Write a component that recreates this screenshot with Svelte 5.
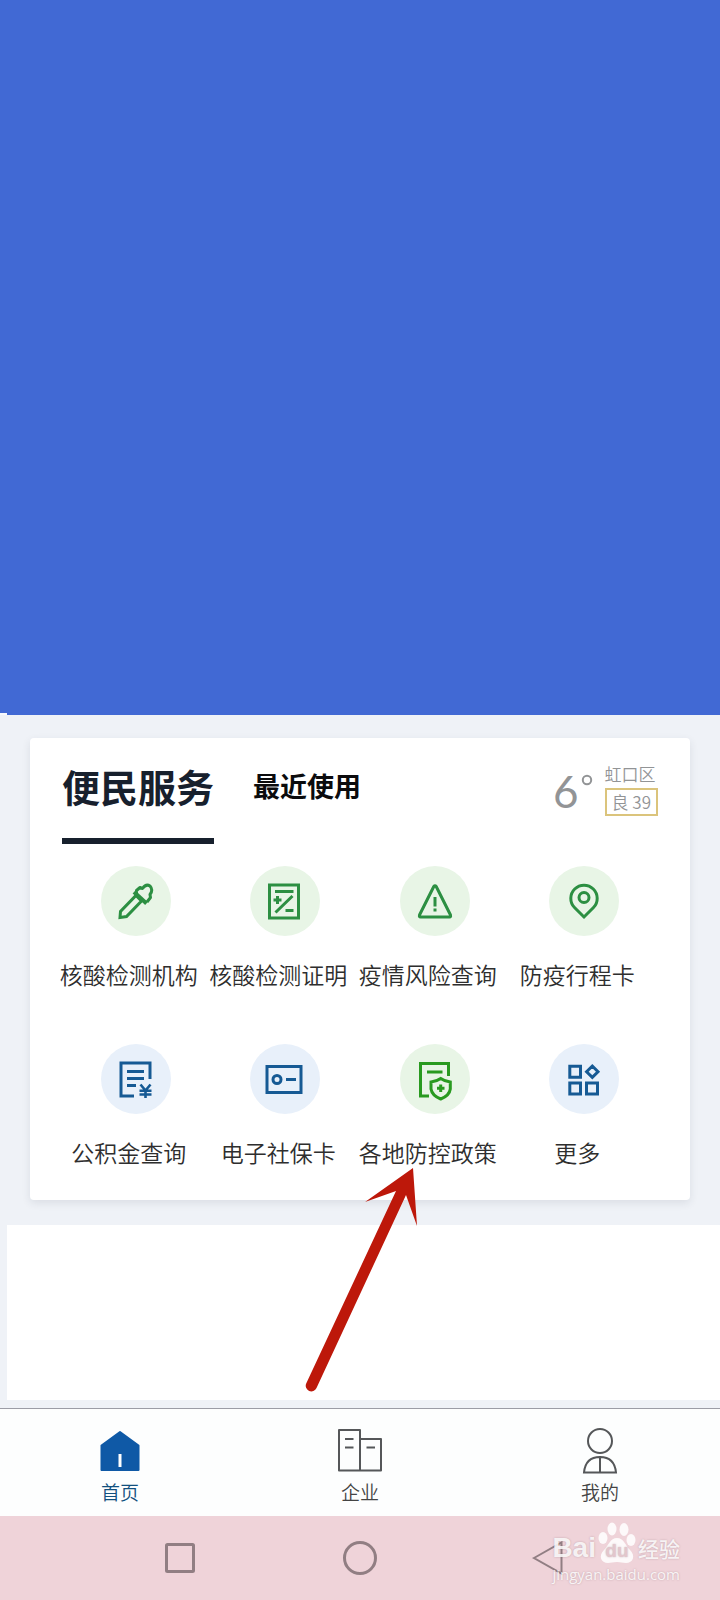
<script lang="ts">
    const services = [
        { icon: "dropper", name: "核酸检测机构", tone: "green" },
        { icon: "report", name: "核酸检测证明", tone: "green" },
        { icon: "warning", name: "疫情风险查询", tone: "green" },
        { icon: "pin", name: "防疫行程卡", tone: "green" },
        { icon: "fund", name: "公积金查询", tone: "blue" },
        { icon: "card", name: "电子社保卡", tone: "blue" },
        { icon: "policy", name: "各地防控政策", tone: "lime" },
        { icon: "more", name: "更多", tone: "blue" },
    ];

    const pages = [
        { icon: "home", name: "首页" },
        { icon: "company", name: "企业" },
        { icon: "mine", name: "我的" },
    ];

    let tab = $state(0);
    let page = $state("home");
</script>

<div class="app">
    <div class="hero"></div>

    <section class="card">
        <header>
            <div class="tabs">
                {#each ["便民服务", "最近使用"] as name, index}
                    <button
                        class="tab {index === tab ? 'active' : ''}"
                        onclick={_ => {
                            tab = index;
                        }}>{name}</button
                    >
                {/each}
            </div>
            <div class="weather">
                <div class="degrees">
                    6<svg width="12" height="12" viewBox="0 0 12 12">
                        <circle cx="6" cy="6" r="4.2" />
                    </svg>
                </div>
                <div class="air">
                    <div class="district">虹口区</div>
                    <div class="quality">良 39</div>
                </div>
            </div>
        </header>

        <div class="services">
            {#each services as service}
                <button class="service">
                    <svg class="icon {service.tone}" viewBox="0 0 72 72">
                        <circle class="disc" cx="36" cy="36" r="35" />
                        {#if service.icon === "dropper"}
                            <path d="M20 52.5L20.500 46.5L36 30.500L41.500 36L26.500 51.5Z" />
                            <path d="M34 27L46.500 38.500" stroke-width="4" />
                            <path
                                class="round"
                                d="M36.500 28V25.500L40 22.500L42.500 23.500Q46 18.500 50 21Q53.500 25 50 29.500L50.500 32.500L47 37"
                            />
                        {:else if service.icon === "report"}
                            <path
                                d="M20.5 20H49.5V53H20.5ZM26 26.5H44.5M28.5 31V39M24.5 35H32.5M26.5 47.5L43.5 31M36.5 45.5H44.5"
                            />
                        {:else if service.icon === "warning"}
                            <path
                                class="round"
                                d="M34.8 21.5Q36 20 37.2 21.5L51.5 50Q52 52 50.5 52H21.5Q20 52 20.5 50Z"
                            />
                            <path d="M36 32V41.5M36 43.5V46.5" />
                        {:else if service.icon === "pin"}
                            <path
                                d="M36 52L26.5 42.5A13.2 13.2 0 1 1 45.5 42.5Z"
                            />
                            <circle cx="36" cy="32.5" r="5" />
                        {:else if service.icon === "fund"}
                            <path
                                d="M34 53H21V20H50V36M27 28.5H44M27 35.5H44M27 42.5H36"
                            />
                            <path
                                d="M40.5 41.5L45.5 47.5L50.5 41.5M45.5 47V55M39.5 47.8H51.5M39.5 51.5H51.5"
                                stroke-width="2.6"
                            />
                        {:else if service.icon === "card"}
                            <path d="M18 23.5H52V49.5H18ZM37 36.5H47" />
                            <circle cx="28" cy="36.5" r="4" />
                        {:else if service.icon === "policy"}
                            <path d="M30 53H21.500V20.5H49.5V33M28 29H43.5" />
                            <path
                                d="M41.7 35.5Q46 38.5 51.3 39V46Q50.5 52.5 41.7 56Q33 52.5 32 46V39Q37.5 38.5 41.7 35.5ZM41.7 41.5V49M38 45.3H45.5"
                            />
                        {:else}
                            <path
                                d="M21.8 23.2H32.5V34.2H21.8ZM21.8 40H32.5V51H21.8ZM38.5 40H49.5V51H38.5ZM44.3 23L50 28.7L44.3 34.4L38.6 28.7Z"
                            />
                        {/if}
                    </svg>
                    <span>{service.name}</span>
                </button>
            {/each}
        </div>

        <svg class="arrow" viewBox="0 0 120 228">
            <path
                d="M113 1L117 59L106 28L16.5 221A5.5 5.5 0 0 1 6.2 216.5L96 24L65 35Z"
            />
        </svg>
    </section>

    <div class="panel"></div>

    <nav>
        {#each pages as item}
            <button
                class={item.icon === page ? "current" : ""}
                onclick={_ => {
                    page = item.icon;
                }}
            >
                <svg width="48" height="48" viewBox="0 0 48 48">
                    {#if item.icon === "home"}
                        <path
                            class="house"
                            d="M24 6L42.500 19.500V44H5.500V19.500Z"
                        />
                        <path class="door" d="M24 28V41" />
                    {:else if item.icon === "company"}
                        <path
                            class="round"
                            d="M3 4H24V44.5H3ZM24 13H45V44.5H24M9 13H17.5M9 21.5H17.5M30.5 21.5H39"
                        />
                    {:else}
                        <circle cx="24" cy="15" r="12" />
                        <path
                            d="M8 46.5Q9.5 31 24 31Q38.5 31 40 46.5ZM24 31V46.5"
                        />
                    {/if}
                </svg>
                <span>{item.name}</span>
            </button>
        {/each}
    </nav>

    <footer>
        <button aria-label="Recents">
            <svg width="36" height="36" viewBox="0 0 36 36">
                <rect x="4.5" y="4.5" width="27" height="27" rx="1" />
            </svg>
        </button>
        <button aria-label="Home">
            <svg width="36" height="36" viewBox="0 0 36 36">
                <circle cx="18" cy="18" r="15.5" />
            </svg>
        </button>
        <button aria-label="Back">
            <svg width="36" height="36" viewBox="0 0 36 36">
                <path d="M12 18L39.5 2.5V33.5Z" />
            </svg>
        </button>

        <div class="watermark">
            <div class="brand">
                <b>Bai</b>
                <div class="paw">
                    <svg width="40" height="42" viewBox="0 0 40 42">
                        <ellipse cx="6" cy="16" rx="4.5" ry="6" />
                        <ellipse cx="15" cy="7" rx="4.5" ry="6.500" />
                        <ellipse cx="27" cy="7.5" rx="4.5" ry="6.500" />
                        <ellipse cx="34" cy="18" rx="4.5" ry="6" />
                        <path
                            d="M20 16C27 16 28 23 33 28C39 34 36 41 29 41C25 41 24 40 20 40C16 40 14 41 11 41C4 41 1 34 7 28C12 23 13 16 20 16Z"
                        />
                    </svg>
                    <i>du</i>
                </div>
                <strong>经验</strong>
            </div>
            <div class="site">jingyan.baidu.com</div>
        </div>
    </footer>
</div>

<style>
    :global(body) {
        background: #eff2f7;
        font-family: "Noto Sans CJK SC", sans-serif;
    }

    button {
        margin: 0;
        padding: 0;
        border: 0;
        background: none;
        font-family: inherit;
        cursor: pointer;
    }

    svg {
        display: block;
        fill: none;
    }

    .app {
        display: flex;
        flex-direction: column;
        min-height: 100vh;
    }

    .hero {
        position: relative;
        flex: 1;
        min-height: 200px;
        background: #4169d4;
    }

    .hero::after {
        content: "";
        position: absolute;
        left: 0;
        bottom: 0;
        width: 7px;
        height: 2px;
        background: #f7f9fd;
    }

    .card {
        position: relative;
        margin: 23px 30px 25px;
        padding-bottom: 31px;
        border-radius: 4px;
        background: #fff;
        box-shadow: 0 3px 8px rgba(40, 50, 70, 0.1);
    }

    header {
        display: flex;
        justify-content: space-between;
        padding: 24px 32px 0;
    }

    .tabs {
        display: flex;
        align-items: flex-start;
        gap: 39px;
    }

    .tab {
        padding-bottom: 28px;
        border-bottom: 6px solid transparent;
        line-height: 48px;
        font-size: 27px;
        font-weight: 700;
        color: #0b0b0d;
    }

    .tab.active {
        border-color: #17202d;
        font-size: 38px;
        color: #17202d;
    }

    .weather {
        display: flex;
        gap: 12px;
        color: #929496;
    }

    .degrees {
        display: flex;
        gap: 2px;
        line-height: 58px;
        font-family: Lato, sans-serif;
        font-size: 44px;
    }

    .degrees svg {
        margin-top: 12px;
        stroke: #929496;
        stroke-width: 2;
    }

    .air {
        font-size: 17px;
        font-weight: 350;
    }

    .district {
        line-height: 24px;
    }

    .quality {
        margin-top: 2px;
        padding: 0 5px;
        border: 2px solid #dbc47c;
        line-height: 24px;
    }

    .services {
        display: grid;
        grid-template-columns: repeat(4, 1fr);
        row-gap: 52px;
        margin-top: 21px;
        padding: 0 38px 0 24px;
    }

    .service {
        display: flex;
        flex-direction: column;
        align-items: center;
        gap: 20px;
        line-height: 34px;
        font-size: 23px;
        font-weight: 350;
        color: #2e2e2e;
        white-space: nowrap;
    }

    .icon {
        width: 72px;
        height: 72px;
        margin-left: 14px;
        stroke-width: 3;
    }

    .icon.green {
        stroke: #2c8f42;
    }

    .icon.lime {
        stroke: #299a20;
    }

    .icon.blue {
        stroke: #165a94;
    }

    .disc {
        fill: #e8f5e6;
        stroke: none;
    }

    .blue .disc {
        fill: #e8f0fa;
    }

    .round {
        stroke-linejoin: round;
    }

    .arrow {
        position: absolute;
        left: 270px;
        top: 429px;
        width: 120px;
        height: 228px;
        fill: #bd180a;
        pointer-events: none;
    }

    .panel {
        height: 175px;
        margin: 0 0 8px 7px;
        background: #fff;
    }

    nav {
        display: grid;
        grid-template-columns: repeat(3, 1fr);
        border-top: 1px solid #9c9da6;
        background: #fdfefe;
    }

    nav button {
        display: flex;
        flex-direction: column;
        align-items: center;
        gap: 4px;
        padding: 17px 0 10px;
        line-height: 28px;
        font-size: 19px;
        font-weight: 350;
        color: #444;
    }

    nav svg {
        stroke: #555759;
        stroke-width: 2;
    }

    nav .current {
        color: #12507f;
    }

    .house {
        fill: #0f59a6;
        stroke: #0f59a6;
        stroke-linejoin: round;
    }

    .door {
        stroke: #fff;
        stroke-width: 3;
    }

    footer {
        position: relative;
        display: grid;
        grid-template-columns: repeat(3, 1fr);
        padding: 24px 12.5%;
        background: #efd3d9;
    }

    footer button {
        display: flex;
        justify-content: center;
    }

    footer button svg {
        overflow: visible;
        margin-left: 0;
        stroke: #917e83;
        stroke-width: 3;
    }

    footer button:nth-child(3) svg {
        stroke-width: 2;
    }

    .watermark {
        position: absolute;
        right: 40px;
        top: 6px;
        color: rgba(255, 255, 255, 0.85);
        text-shadow: 0 0 2px rgba(120, 90, 100, 0.4);
    }

    .brand {
        display: flex;
        align-items: flex-end;
        justify-content: space-between;
        height: 42px;
        line-height: 32px;
    }

    .brand b {
        font-family: "Liberation Sans", sans-serif;
        font-size: 28px;
    }

    .paw {
        position: relative;
    }

    .paw svg {
        fill: rgba(255, 255, 255, 0.85);
    }

    .paw i {
        position: absolute;
        left: 0;
        right: 0;
        bottom: 2px;
        line-height: 22px;
        text-align: center;
        font-family: "Liberation Sans", sans-serif;
        font-size: 19px;
        font-weight: 700;
        font-style: normal;
        color: #e3c6cc;
    }

    .brand strong {
        font-size: 21px;
        font-weight: 500;
    }

    .site {
        line-height: 20px;
        font-family: "Open Sans", sans-serif;
        font-size: 15px;
    }
</style>
